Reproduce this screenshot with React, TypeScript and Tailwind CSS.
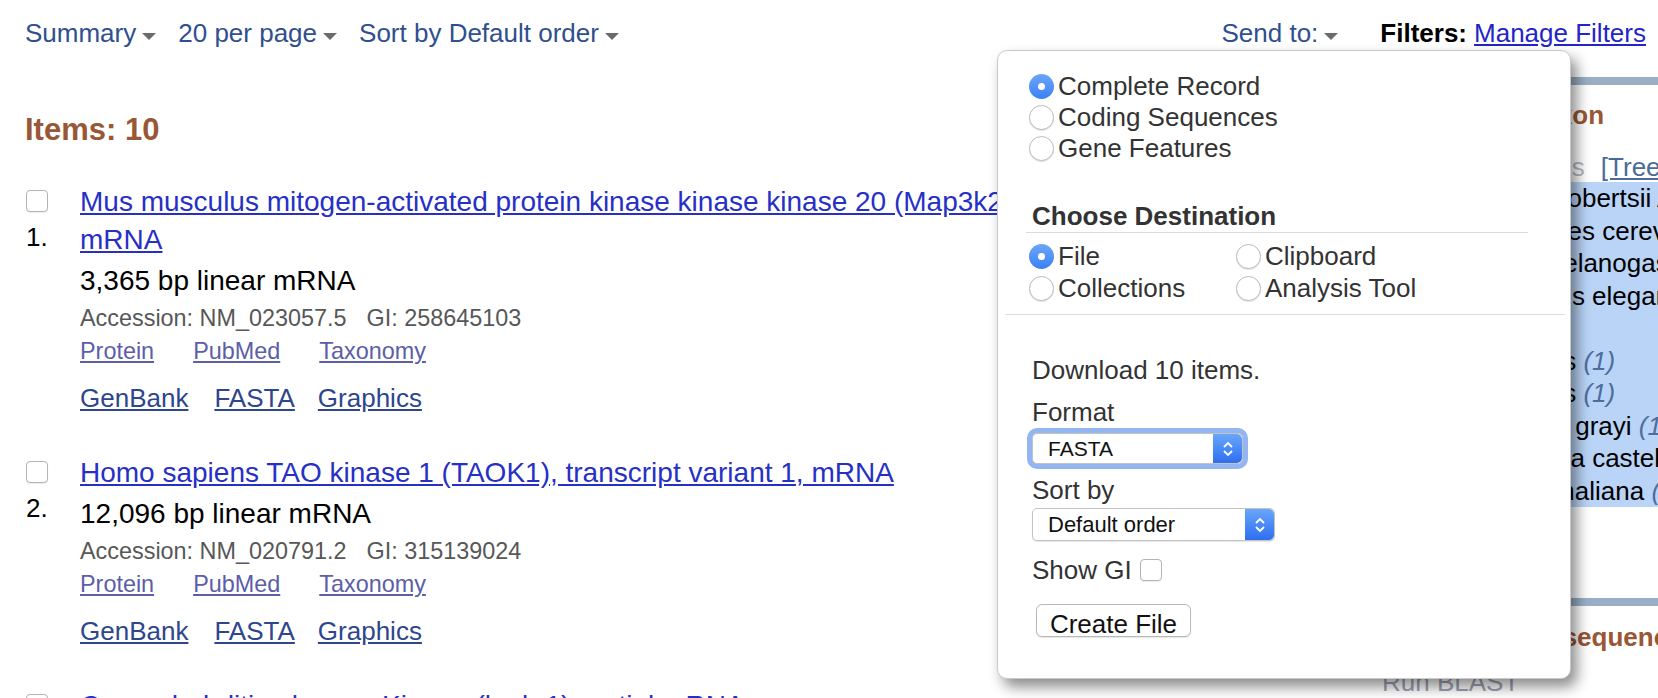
const docs = [
  {
    n: 1,
    title: 'Mus musculus mitogen-activated protein kinase kinase kinase 20 (Map3k20), mRNA',
    bp: '3,365 bp linear mRNA',
    acc: 'NM_023057.5',
    gi: '258645103',
  },
  {
    n: 2,
    title: 'Homo sapiens TAO kinase 1 (TAOK1), transcript variant 1, mRNA',
    bp: '12,096 bp linear mRNA',
    acc: 'NM_020791.2',
    gi: '315139024',
  },
  {
    n: 3,
    title: 'Caenorhabditis elegans Kinase (lpok-1) partial mRNA',
    bp: '1,512 bp linear mRNA',
    acc: 'NM_001026703.3',
    gi: '71984422',
  },
];

const organisms = [
  'Metarhizium robertsii ARSEF 23',
  'Saccharomyces cerevisiae S288C',
  'Drosophila melanogaster',
  'Caenorhabditis elegans',
  'Zea mays',
  'Homo sapiens',
  'Mus musculus',
  'Trypanosoma grayi',
  'Acanthamoeba castellanii str. Neff',
  'Arabidopsis thaliana',
];

function Caret() {
  return (
    <svg width="14" height="7" viewBox="0 0 14 7" className="mt-[6px] ml-[6px] shrink-0">
      <polygon points="0,0 14,0 7,7" fill="#6b6b6b" />
    </svg>
  );
}

function Checkbox() {
  return <span className="block h-[22px] w-[22px] rounded-[4px] border border-[#b4b4b4] bg-white shadow-[0_1px_1px_rgba(0,0,0,0.08)]" />;
}

function Radio({ on }: { on?: boolean }) {
  if (on) {
    return (
      <span className="flex h-[25px] w-[25px] shrink-0 items-center justify-center rounded-full bg-gradient-to-b from-[#6aa6f8] to-[#3b80f5]">
        <span className="h-[7px] w-[7px] rounded-full bg-white" />
      </span>
    );
  }
  return <span className="h-[25px] w-[25px] shrink-0 rounded-full border border-[#bcbcbc] bg-white shadow-[0_1px_1px_rgba(0,0,0,0.12)]" />;
}

function Stepper() {
  return (
    <span className="flex h-full w-[29px] items-center justify-center rounded-r-[5px] bg-gradient-to-b from-[#6aa6fa] to-[#2e6ef0]">
      <svg width="12" height="20" viewBox="0 0 12 20">
        <path d="M2 8 L6 4 L10 8 M2 12 L6 16 L10 12" stroke="white" strokeWidth="1.8" fill="none" />
      </svg>
    </span>
  );
}

function DocItem({ d }: { d: (typeof docs)[number] }) {
  return (
    <div className="mb-[39px] flex">
      <div className="w-[80px] shrink-0 pl-[26px] pt-[7px]">
        <Checkbox />
        <div className="mt-[10px] text-[26px] leading-[30px] text-black">{d.n}.</div>
      </div>
      <div className="w-[1000px]">
        <a href="#" className="block text-[28px] leading-[38px] text-[#2730c6] underline">
          {d.title}
        </a>
        <div className="mt-[4px] text-[28px] leading-[36px] text-black">{d.bp}</div>
        <div className="mt-[3px] text-[23.4px] leading-[32px] text-[#575757]">
          Accession: {d.acc}
          <span className="ml-[20px]">GI: {d.gi}</span>
        </div>
        <div className="mt-[1px] flex text-[23.4px] leading-[32px] text-[#5c5ea8]">
          <a href="#" className="underline">Protein</a>
          <a href="#" className="ml-[39px] underline">PubMed</a>
          <a href="#" className="ml-[39px] underline">Taxonomy</a>
        </div>
        <div className="mt-[14px] flex text-[26px] leading-[34px] text-[#2d468c]">
          <a href="#" className="underline">GenBank</a>
          <a href="#" className="ml-[26px] underline">FASTA</a>
          <a href="#" className="ml-[23px] underline">Graphics</a>
        </div>
      </div>
    </div>
  );
}

export default function App() {
  return (
    <div className="relative h-[698px] w-[1658px] overflow-hidden bg-white font-['Liberation_Sans',Arial,sans-serif]">
      <div className="flex h-[66px] items-center justify-between pl-[25px] pr-[12px] text-[26px] text-[#2f4f8f]">
        <div className="flex items-center">
          <span>Summary</span>
          <Caret />
          <span className="ml-[22px]">20 per page</span>
          <Caret />
          <span className="ml-[22px]">Sort by Default order</span>
          <Caret />
        </div>
        <div className="flex items-center">
          <span>Send to:</span>
          <Caret />
          <span className="ml-[42px] font-bold text-black">Filters:</span>
          <a href="#" className="ml-[7px] text-[#2424c8] underline">Manage Filters</a>
        </div>
      </div>

      <div className="flex">
        <main className="w-[1382px] shrink-0">
          <div className="mt-[44px] pl-[25px] text-[31px] font-bold leading-[40px] text-[#985735]">Items: 10</div>
          <div className="mt-[33px]">
            {docs.map((d) => (
              <DocItem key={d.n} d={d} />
            ))}
          </div>
        </main>

        <aside className="w-[276px] shrink-0 pt-[11px] text-[26px]">
          <div className="border-t-[8px] border-[#9aafc6] pt-[14px]">
            <div className="whitespace-nowrap pl-[14px] font-bold leading-[32px] text-[#985735]">Results by taxon</div>
            <div className="mt-[20px] whitespace-nowrap pl-[28px] leading-[32px] text-[#b3b9c4]">
              Top Organisms
              <a href="#" className="ml-[16px] text-[#4a6a9a] underline">[Tree]</a>
            </div>
            <div className="mt-[-1px] bg-[#b9d4f7]">
              {organisms.map((o) => (
                <div key={o} className="h-[32.5px] whitespace-nowrap pl-[28px] leading-[32.5px] text-black">
                  {o} <i className="text-[#4d6d9c]">(1)</i>
                </div>
              ))}
            </div>
          </div>
          <div className="mt-[91px] border-t-[8px] border-[#9aafc6] pt-[15px]">
            <div className="whitespace-nowrap font-bold leading-[32px] text-[#985735]">Analyze these sequences</div>
            <div className="mt-[13px] leading-[32px] text-[#9ba3b3]">Run BLAST</div>
          </div>
        </aside>
      </div>

      <div className="absolute left-[997px] top-[50px] h-[629px] w-[574px] rounded-[10px] border border-[#c9c9c9] bg-white text-[26px] text-[#333] shadow-[6px_8px_14px_rgba(0,0,0,0.45)]">
        <div className="pl-[31px] pt-[20px]">
          {['Complete Record', 'Coding Sequences', 'Gene Features'].map((t, i) => (
            <div key={t} className="flex h-[31px] items-center">
              <Radio on={i === 0} />
              <span className="ml-[4px]">{t}</span>
            </div>
          ))}
        </div>
        <div className="ml-[28px] mt-[36px] w-[502px] border-b border-[#dcdcdc] pl-[6px] font-bold leading-[32px]">
          Choose Destination
        </div>
        <div className="mt-[7px] grid grid-cols-[207px_1fr] pl-[31px]">
          {['File', 'Clipboard', 'Collections', 'Analysis Tool'].map((t, i) => (
            <div key={t} className="flex h-[32px] items-center">
              <Radio on={i === 0} />
              <span className="ml-[4px]">{t}</span>
            </div>
          ))}
        </div>
        <div className="ml-[7px] mt-[10px] w-[560px] border-t border-[#dcdcdc]" />
        <div className="pl-[34px]">
          <div className="mt-[39px] leading-[32px]">Download 10 items.</div>
          <div className="mt-[10px] leading-[32px]">Format</div>
          <div className="mt-[5px] flex h-[31px] w-[211px] rounded-[5px] border border-[#c3c3c3] bg-white ring-[5px] ring-[#93b6f2]">
            <span className="flex flex-1 items-center pl-[15px] text-[21px] text-[#111]">FASTA</span>
            <Stepper />
          </div>
          <div className="mt-[10px] leading-[32px]">Sort by</div>
          <div className="mt-[2px] flex h-[33px] w-[243px] rounded-[5px] border border-[#c3c3c3] bg-white shadow-[0_1px_1px_rgba(0,0,0,0.1)]">
            <span className="flex flex-1 items-center pl-[15px] text-[22px] text-[#111]">Default order</span>
            <Stepper />
          </div>
          <div className="mt-[13px] flex items-center leading-[32px]">
            <span>Show GI</span>
            <span className="ml-[8px]">
              <Checkbox />
            </span>
          </div>
          <button className="ml-[4px] mt-[18px] h-[33px] w-[155px] rounded-[6px] border border-[#b8b8b8] bg-white text-[26px] text-[#111] shadow-[0_1px_1px_rgba(0,0,0,0.1)]">
            Create File
          </button>
        </div>
      </div>
    </div>
  );
}
